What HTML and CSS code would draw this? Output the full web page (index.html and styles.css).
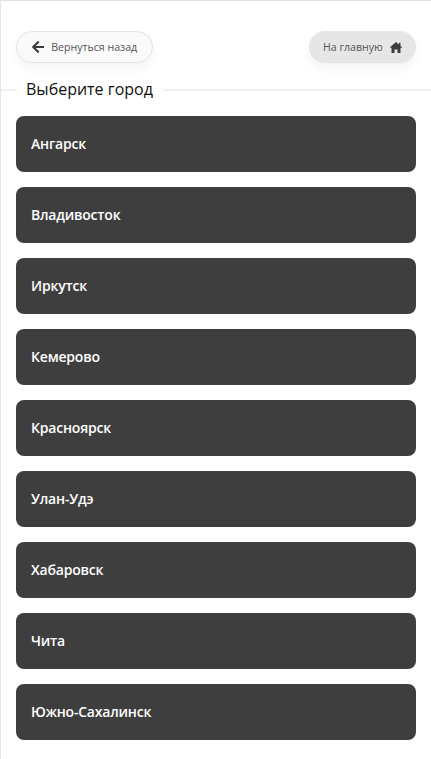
FILE: index.html
```html
<!DOCTYPE html>
<html lang="ru">
<head>
    <meta charset="UTF-8">
    <meta name="viewport" content="width=device-width, initial-scale=1.0">
    <title>Выберите город</title>
    <link rel="stylesheet" href="styles.css">
</head>
<body>
    <div class="page">
        <div class="top-nav">
            <a href="#" class="nav-btn back-btn">
                <svg class="nav-icon" viewBox="0 0 448 512"><path d="M257.500 445.100l-22.200 22.200c-9.400 9.400-24.600 9.400-33.900 0L7 273c-9.400-9.400-9.400-24.600 0-33.900L201.400 44.700c9.400-9.400 24.600-9.400 33.900 0l22.200 22.200c9.500 9.500 9.300 25-.4 34.300L136.600 216H424c13.300 0 24 10.700 24 24v32c0 13.300-10.700 24-24 24H136.600l120.500 114.800c9.800 9.300 10 24.800.4 34.300z"/></svg>
                <span>Вернуться назад</span>
            </a>
            <a href="#" class="nav-btn home-btn">
                <span>На главную</span>
                <svg class="nav-icon" viewBox="0 0 12 11"><path d="M6 0L8.900 2.500V.8H10.500V3.900L12 5.200 11.300 6 10.500 5.500V10.500Q10.500 11 10 11H7.500V7.500H4.500V11H2Q1.500 11 1.500 10.500V5.500L.7 6 0 5.200Z"/></svg>
            </a>
        </div>
        <div class="title-row">
            <span class="title">Выберите город</span>
        </div>
        <div class="city-list">
            <a href="#" class="city">Ангарск</a>
            <a href="#" class="city">Владивосток</a>
            <a href="#" class="city">Иркутск</a>
            <a href="#" class="city">Кемерово</a>
            <a href="#" class="city">Красноярск</a>
            <a href="#" class="city">Улан-Удэ</a>
            <a href="#" class="city">Хабаровск</a>
            <a href="#" class="city">Чита</a>
            <a href="#" class="city">Южно-Сахалинск</a>
        </div>
    </div>
</body>
</html>
```

FILE: styles.css
```css
html, body {
    margin: 0;
    padding: 0;
}
body {
    font-family: "Open Sans", "Noto Sans", sans-serif;
    background-color: #ffffff;
    overflow: hidden;
}
a {
    text-decoration: none;
}
.page {
    box-sizing: border-box;
    height: 759px;
    padding: 30px 15px 0 15px;
    border-top: 1px solid #e2e2e2;
    border-left: 1px solid #e6e6e6;
}
.top-nav {
    display: flex;
    justify-content: space-between;
    align-items: center;
}
.nav-btn {
    box-sizing: border-box;
    display: flex;
    align-items: center;
    height: 32px;
    border-radius: 16px;
    font-size: 10.6px;
    color: #555555;
    box-shadow: 0 5px 12px rgba(0, 0, 0, 0.05);
}
.nav-icon {
    fill: #3c3c3c;
    flex-shrink: 0;
}
.back-btn {
    width: 137px;
    padding-left: 15px;
    gap: 7px;
    background-color: #fafafa;
    border: 1px solid #e4e4e4;
}
.back-btn .nav-icon {
    height: 14px;
}
.home-btn {
    width: 107px;
    padding-left: 14px;
    gap: 7px;
    background-color: #e6e6e6;
}
.home-btn .nav-icon {
    height: 11px;
}
.title-row {
    display: flex;
    align-items: center;
    height: 24px;
    margin: 15px -15px 14px -15px;
}
.title-row::before {
    content: "";
    width: 15px;
    height: 2px;
    background-color: #f0f0f0;
}
.title-row::after {
    content: "";
    flex: 1;
    height: 2px;
    background-color: #f0f0f0;
}
.title {
    padding: 0 10px;
    font-size: 16px;
    line-height: 22px;
    margin-bottom: 3px;
    color: #111111;
}
.city-list {
    display: flex;
    flex-direction: column;
    gap: 15px;
}
.city {
    box-sizing: border-box;
    display: flex;
    align-items: center;
    height: 56px;
    padding: 0 15px 2px 15px;
    border-radius: 8px;
    background-color: #3e3e3e;
    color: #ffffff;
    font-size: 14px;
    font-weight: 600;
    letter-spacing: -0.2px;
}
```
